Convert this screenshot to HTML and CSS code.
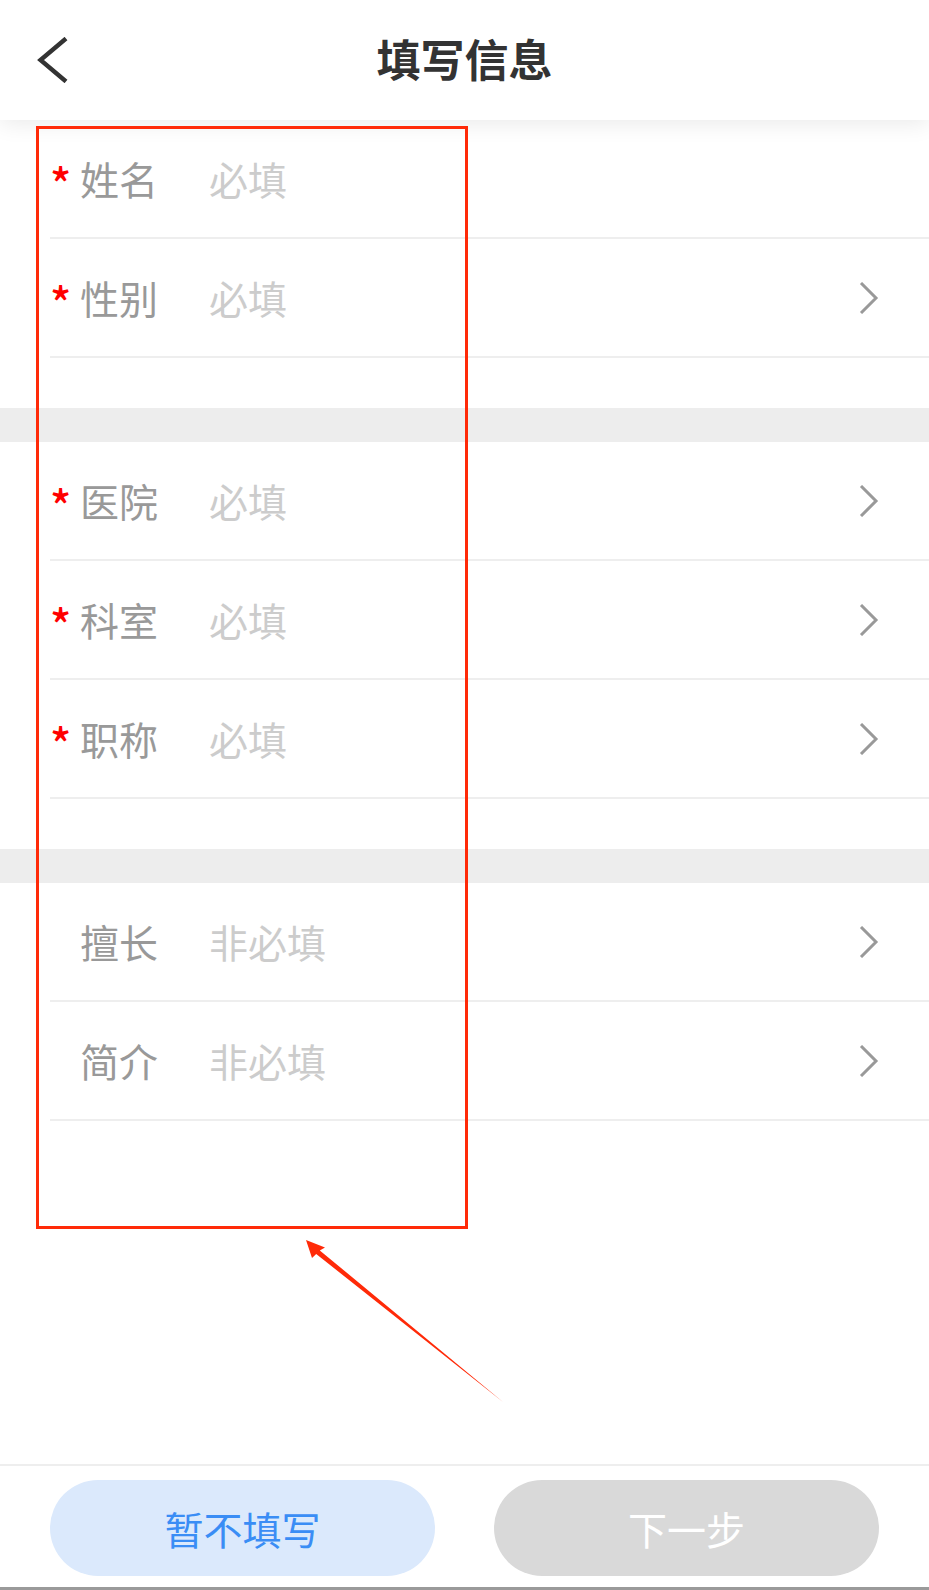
FILE: index.html
```html
<!DOCTYPE html>
<html lang="zh-CN">
<head>
<meta charset="utf-8">
<title>填写信息</title>
<link rel="stylesheet" href="styles.css">
</head>
<body>
<div class="page">
  <header class="header">
    <div class="back">
      <svg width="32" height="46" viewBox="0 0 32 46"><polyline points="30,1.5 4.5,23 30,44.5" fill="none" stroke="#333" stroke-width="4.4"/></svg>
    </div>
    <h1 class="title">填写信息</h1>
    <div></div>
  </header>

  <main class="content">
    <section class="group">
      <div class="row">
        <span class="req">*</span><span class="label">姓名</span><span class="value">必填</span>
      </div>
      <div class="row">
        <span class="req">*</span><span class="label">性别</span><span class="value">必填</span>
        <svg class="arrow" width="20" height="32" viewBox="0 0 20 32"><polyline points="2,1 17,16 2,31" fill="none" stroke="#999" stroke-width="3"/></svg>
      </div>
    </section>
    <div class="band"></div>
    <section class="group">
      <div class="row">
        <span class="req">*</span><span class="label">医院</span><span class="value">必填</span>
        <svg class="arrow" width="20" height="32" viewBox="0 0 20 32"><polyline points="2,1 17,16 2,31" fill="none" stroke="#999" stroke-width="3"/></svg>
      </div>
      <div class="row">
        <span class="req">*</span><span class="label">科室</span><span class="value">必填</span>
        <svg class="arrow" width="20" height="32" viewBox="0 0 20 32"><polyline points="2,1 17,16 2,31" fill="none" stroke="#999" stroke-width="3"/></svg>
      </div>
      <div class="row">
        <span class="req">*</span><span class="label">职称</span><span class="value">必填</span>
        <svg class="arrow" width="20" height="32" viewBox="0 0 20 32"><polyline points="2,1 17,16 2,31" fill="none" stroke="#999" stroke-width="3"/></svg>
      </div>
    </section>
    <div class="band"></div>
    <section class="group">
      <div class="row">
        <span class="req"></span><span class="label">擅长</span><span class="value">非必填</span>
        <svg class="arrow" width="20" height="32" viewBox="0 0 20 32"><polyline points="2,1 17,16 2,31" fill="none" stroke="#999" stroke-width="3"/></svg>
      </div>
      <div class="row">
        <span class="req"></span><span class="label">简介</span><span class="value">非必填</span>
        <svg class="arrow" width="20" height="32" viewBox="0 0 20 32"><polyline points="2,1 17,16 2,31" fill="none" stroke="#999" stroke-width="3"/></svg>
      </div>
    </section>
  </main>

  <footer class="footer">
    <button class="btn btn-skip">暂不填写</button>
    <button class="btn btn-next">下一步</button>
  </footer>

  <div class="mark-box"></div>
  <svg class="mark-arrow" width="929" height="1590" viewBox="0 0 929 1590">
    <polygon points="306,1240 325,1247.5 319.8,1250.4 503,1402 316.2,1254 312,1258" fill="#ff2a08"/>
  </svg>
</div>
</body>
</html>
```

FILE: styles.css
```css
* {
  box-sizing: border-box;
}

html, body {
  margin: 0;
  padding: 0;
  background: #fff;
}

body {
  font-family: "Noto Sans CJK SC", "Noto Sans", sans-serif;
}

.page {
  position: relative;
  width: 929px;
  height: 1590px;
  display: flex;
  flex-direction: column;
  overflow: hidden;
}

.header {
  position: relative;
  z-index: 2;
  height: 120px;
  flex: none;
  display: grid;
  grid-template-columns: 1fr auto 1fr;
  align-items: center;
  padding: 0 36px;
  background: #fff;
  box-shadow: 0 3px 22px rgba(0, 0, 0, 0.09);
}

.back {
  display: flex;
  align-items: center;
}

.back svg {
  display: block;
}

.title {
  margin: 0 0 4px;
  font-size: 44px;
  font-weight: 700;
  color: #333;
  line-height: 1;
}

.content {
  flex: 1;
}

.group {
  padding-bottom: 50px;
}

.group:last-child {
  padding-bottom: 0;
}

.band {
  height: 34px;
  background: #ededed;
}

.row {
  height: 119px;
  margin-left: 50px;
  padding-right: 50px;
  border-bottom: 2px solid #eeeeee;
  display: flex;
  align-items: center;
  font-size: 39px;
  line-height: 1;
}

.req {
  width: 30px;
  flex: none;
  color: #ff0000;
  font-size: 44px;
  font-weight: 500;
  margin-top: 6px;
}

.label {
  width: 129px;
  flex: none;
  color: #999;
}

.value {
  flex: 1;
  color: #cccccc;
}

.arrow {
  display: block;
  flex: none;
}

.footer {
  flex: none;
  display: grid;
  grid-template-columns: 1fr 1fr;
  column-gap: 59px;
  padding: 14px 50px 11px;
  border-top: 2px solid #eeeeee;
  border-bottom: 3px solid #9a9a9a;
  background: #fff;
}

.btn {
  height: 96px;
  border: none;
  border-radius: 48px;
  font-family: inherit;
  font-size: 39px;
  line-height: 1;
  padding: 0;
}

.btn-skip {
  background: #dbe9fc;
  color: #3a8df5;
}

.btn-next {
  background: #d9d9d9;
  color: #fff;
}

.mark-box {
  position: absolute;
  left: 36px;
  top: 126px;
  width: 432px;
  height: 1103px;
  border: 3px solid #ff2a08;
  z-index: 3;
  pointer-events: none;
}

.mark-arrow {
  position: absolute;
  left: 0;
  top: 0;
  z-index: 3;
  pointer-events: none;
}
```
